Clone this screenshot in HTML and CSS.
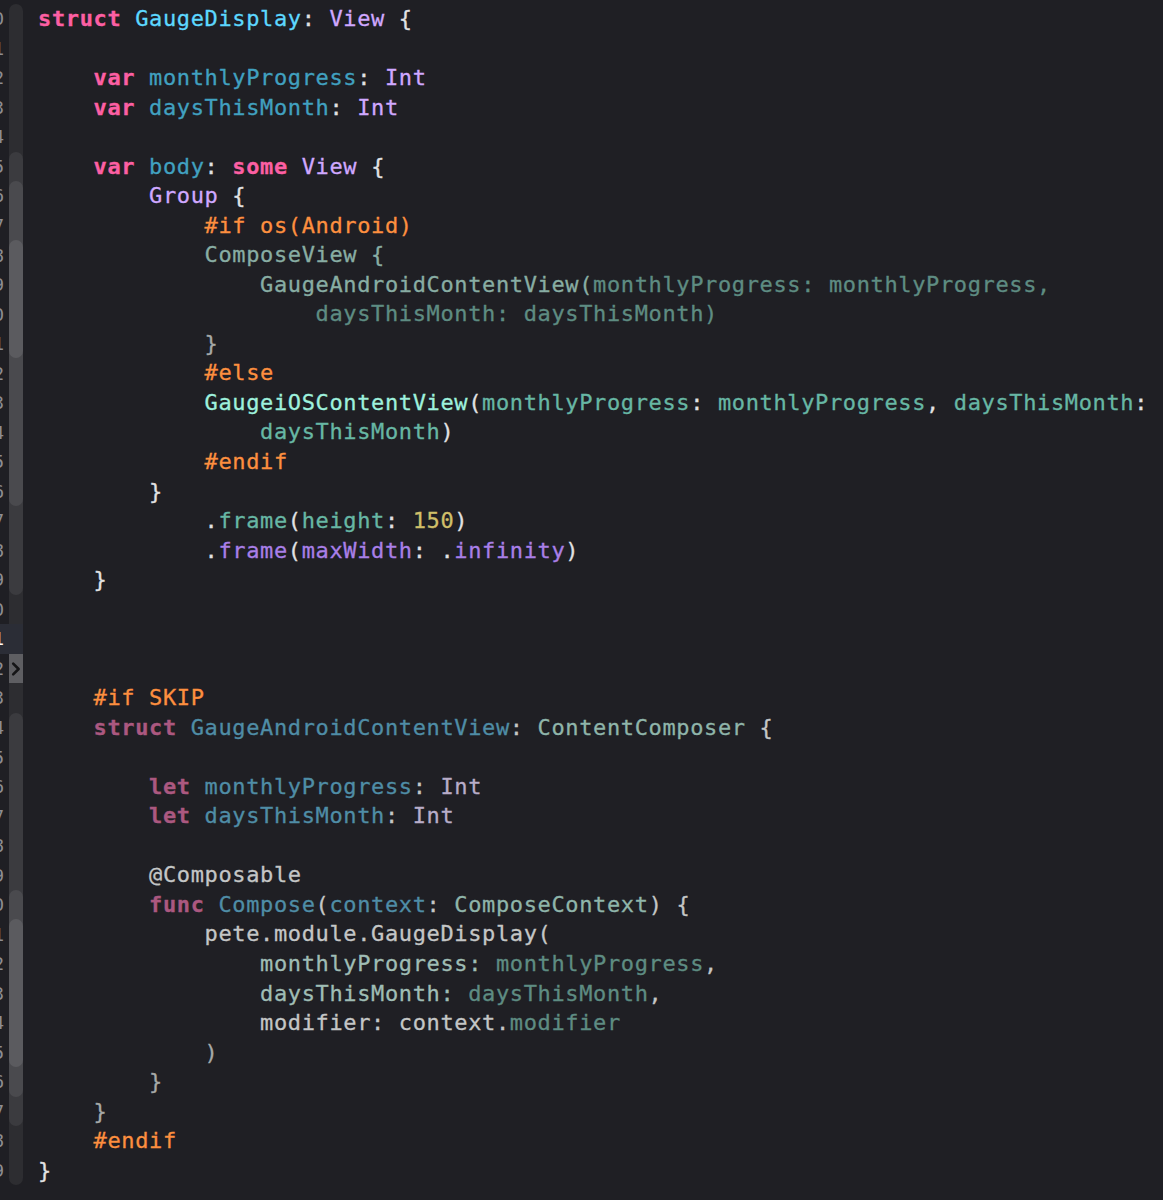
FILE: index.html
```html
<!DOCTYPE html>
<html lang="en">

<head>
    <meta charset="UTF-8">
    <meta name="viewport" content="width=device-width, initial-scale=1.0">
    <title>GaugeDisplay.swift</title>
    <link rel="stylesheet" href="styles.css">
</head>

<body>
    <div class="editor">
        <div class="line"><div class="gut"><span class="num"><b>10</b></span><span class="rib"><i class="d1 top"></i></span></div><pre class="src"><span class="k">struct</span> <span class="td">GaugeDisplay</span>: <span class="ty">View</span> {</pre></div>
        <div class="line"><div class="gut"><span class="num"><b>11</b></span><span class="rib"><i class="d1"></i></span></div><pre class="src"> </pre></div>
        <div class="line"><div class="gut"><span class="num"><b>12</b></span><span class="rib"><i class="d1"></i></span></div><pre class="src">    <span class="k">var</span> <span class="od">monthlyProgress</span>: <span class="ty">Int</span></pre></div>
        <div class="line"><div class="gut"><span class="num"><b>13</b></span><span class="rib"><i class="d1"></i></span></div><pre class="src">    <span class="k">var</span> <span class="od">daysThisMonth</span>: <span class="ty">Int</span></pre></div>
        <div class="line"><div class="gut"><span class="num"><b>14</b></span><span class="rib"><i class="d1"></i></span></div><pre class="src"> </pre></div>
        <div class="line"><div class="gut"><span class="num"><b>15</b></span><span class="rib in1"><i class="d2 top"></i></span></div><pre class="src">    <span class="k">var</span> <span class="od">body</span>: <span class="k">some</span> <span class="ty">View</span> {</pre></div>
        <div class="line"><div class="gut"><span class="num"><b>16</b></span><span class="rib in2"><i class="d3 top"></i></span></div><pre class="src">        <span class="ty">Group</span> {</pre></div>
        <div class="line"><div class="gut"><span class="num"><b>17</b></span><span class="rib"><i class="d3"></i></span></div><pre class="src">            <span class="pp">#if os(Android)</span></pre></div>
        <div class="line"><div class="gut"><span class="num"><b>18</b></span><span class="rib in3"><i class="d4 top"></i></span></div><pre class="src">            <span class="dc">ComposeView {</span></pre></div>
        <div class="line"><div class="gut"><span class="num"><b>19</b></span><span class="rib"><i class="d4"></i></span></div><pre class="src">                <span class="dc">GaugeAndroidContentView(</span><span class="da">monthlyProgress: monthlyProgress,</span></pre></div>
        <div class="line"><div class="gut"><span class="num"><b>20</b></span><span class="rib"><i class="d4"></i></span></div><pre class="src">                    <span class="da">daysThisMonth: daysThisMonth)</span></pre></div>
        <div class="line"><div class="gut"><span class="num"><b>21</b></span><span class="rib in3"><i class="d4 bot"></i></span></div><pre class="src">            <span class="dg">}</span></pre></div>
        <div class="line"><div class="gut"><span class="num"><b>22</b></span><span class="rib"><i class="d3"></i></span></div><pre class="src">            <span class="pp">#else</span></pre></div>
        <div class="line"><div class="gut"><span class="num"><b>23</b></span><span class="rib"><i class="d3"></i></span></div><pre class="src">            <span class="pt">GaugeiOSContentView</span>(<span class="pm">monthlyProgress</span>: <span class="pm">monthlyProgress</span>, <span class="pm">daysThisMonth</span>:</pre></div>
        <div class="line"><div class="gut"><span class="num"><b>24</b></span><span class="rib"><i class="d3"></i></span></div><pre class="src">                <span class="pm">daysThisMonth</span>)</pre></div>
        <div class="line"><div class="gut"><span class="num"><b>25</b></span><span class="rib"><i class="d3"></i></span></div><pre class="src">            <span class="pp">#endif</span></pre></div>
        <div class="line"><div class="gut"><span class="num"><b>26</b></span><span class="rib in2"><i class="d3 bot"></i></span></div><pre class="src">        }</pre></div>
        <div class="line"><div class="gut"><span class="num"><b>27</b></span><span class="rib"><i class="d2"></i></span></div><pre class="src">            .<span class="pm">frame</span>(<span class="pm">height</span>: <span class="nu">150</span>)</pre></div>
        <div class="line"><div class="gut"><span class="num"><b>28</b></span><span class="rib"><i class="d2"></i></span></div><pre class="src">            .<span class="om">frame</span>(<span class="om">maxWidth</span>: .<span class="om">infinity</span>)</pre></div>
        <div class="line"><div class="gut"><span class="num"><b>29</b></span><span class="rib in1"><i class="d2 bot"></i></span></div><pre class="src">    }</pre></div>
        <div class="line"><div class="gut"><span class="num"><b>30</b></span><span class="rib"><i class="d1"></i></span></div><pre class="src"> </pre></div>
        <div class="line cur"><div class="gut"><span class="num"><b>31</b></span><span class="rib"></span></div><pre class="src"> </pre></div>
        <div class="line"><div class="gut"><span class="num"><b>32</b></span><span class="rib fold"><svg width="14" height="29" viewBox="0 0 14 29"><path d="M4.2 9.6 L9.6 15 L4.2 20.4" fill="none" stroke="#141416" stroke-width="2.6" stroke-linecap="round" stroke-linejoin="round"/></svg></span></div><pre class="src"> </pre></div>
        <div class="line"><div class="gut"><span class="num"><b>33</b></span><span class="rib"><i class="d1"></i></span></div><pre class="src">    <span class="pp">#if SKIP</span></pre></div>
        <div class="line"><div class="gut"><span class="num"><b>34</b></span><span class="rib in1"><i class="d2 top"></i></span></div><pre class="src">    <span class="dk">struct</span> <span class="db">GaugeAndroidContentView</span><span class="dp">: </span><span class="dt">ContentComposer</span><span class="dp"> {</span></pre></div>
        <div class="line"><div class="gut"><span class="num"><b>35</b></span><span class="rib"><i class="d2"></i></span></div><pre class="src"> </pre></div>
        <div class="line"><div class="gut"><span class="num"><b>36</b></span><span class="rib"><i class="d2"></i></span></div><pre class="src">        <span class="dk">let</span> <span class="db">monthlyProgress</span><span class="dp">: </span><span class="dv">Int</span></pre></div>
        <div class="line"><div class="gut"><span class="num"><b>37</b></span><span class="rib"><i class="d2"></i></span></div><pre class="src">        <span class="dk">let</span> <span class="db">daysThisMonth</span><span class="dp">: </span><span class="dv">Int</span></pre></div>
        <div class="line"><div class="gut"><span class="num"><b>38</b></span><span class="rib"><i class="d2"></i></span></div><pre class="src"> </pre></div>
        <div class="line"><div class="gut"><span class="num"><b>39</b></span><span class="rib"><i class="d2"></i></span></div><pre class="src">        <span class="dp">@Composable</span></pre></div>
        <div class="line"><div class="gut"><span class="num"><b>40</b></span><span class="rib in2"><i class="d3 top"></i></span></div><pre class="src">        <span class="dk">func</span> <span class="db">Compose</span><span class="dp">(</span><span class="db">context</span><span class="dp">: </span><span class="dt">ComposeContext</span><span class="dp">) {</span></pre></div>
        <div class="line"><div class="gut"><span class="num"><b>41</b></span><span class="rib in3"><i class="d4 top"></i></span></div><pre class="src">            <span class="dp">pete.module.GaugeDisplay(</span></pre></div>
        <div class="line"><div class="gut"><span class="num"><b>42</b></span><span class="rib"><i class="d4"></i></span></div><pre class="src">                <span class="dl">monthlyProgress: </span><span class="da">monthlyProgress</span><span class="dp">,</span></pre></div>
        <div class="line"><div class="gut"><span class="num"><b>43</b></span><span class="rib"><i class="d4"></i></span></div><pre class="src">                <span class="dl">daysThisMonth: </span><span class="da">daysThisMonth</span><span class="dp">,</span></pre></div>
        <div class="line"><div class="gut"><span class="num"><b>44</b></span><span class="rib"><i class="d4"></i></span></div><pre class="src">                <span class="dp">modifier: context.</span><span class="da">modifier</span></pre></div>
        <div class="line"><div class="gut"><span class="num"><b>45</b></span><span class="rib in3"><i class="d4 bot"></i></span></div><pre class="src">            <span class="dg">)</span></pre></div>
        <div class="line"><div class="gut"><span class="num"><b>46</b></span><span class="rib in2"><i class="d3 bot"></i></span></div><pre class="src">        <span class="dg">}</span></pre></div>
        <div class="line"><div class="gut"><span class="num"><b>47</b></span><span class="rib in1"><i class="d2 bot"></i></span></div><pre class="src">    <span class="dg">}</span></pre></div>
        <div class="line"><div class="gut"><span class="num"><b>48</b></span><span class="rib"><i class="d1"></i></span></div><pre class="src">    <span class="pp">#endif</span></pre></div>
        <div class="line"><div class="gut"><span class="num"><b>49</b></span><span class="rib"><i class="d1 bot"></i></span></div><pre class="src">}</pre></div>
    </div>
</body>

</html>
```

FILE: styles.css
```css
* {
    padding: 0;
    margin: 0;
    box-sizing: border-box;
}

html,
body {
    background-color: #1f1f24;
}

body {
    min-height: 1200px;
    padding-top: 4px;
}

.editor {
    display: flex;
    flex-direction: column;
}

.line {
    display: flex;
    height: 29.54px;
}

/* gutter: line numbers (scrolled off to the left) + folding ribbon */
.gut {
    display: flex;
    width: 23px;
    flex-shrink: 0;
}

.num {
    display: flex;
    justify-content: flex-end;
    align-items: center;
    width: 9px;
    padding-right: 5px;
    overflow: hidden;
    font-family: "DejaVu Sans Mono", monospace;
    font-size: 18px;
    color: #8d8d92;
}

.num b {
    font-weight: normal;
    white-space: nowrap;
}

.cur .gut {
    background-color: #2b2d36;
}

.cur .num {
    color: #ffffff;
}

.rib {
    display: block;
    width: 14px;
    height: 100%;
}

.rib i {
    display: block;
    height: 100%;
}

.rib.in1 {
    background-color: #2d2d31;
}

.rib.in2 {
    background-color: #3b3b3f;
}

.rib.in3 {
    background-color: #4a4a4e;
}

.rib .d1 {
    background-color: #2d2d31;
}

.rib .d2 {
    background-color: #3b3b3f;
}

.rib .d3 {
    background-color: #4a4a4e;
}

.rib .d4 {
    background-color: #5b5b5f;
}

.rib .top {
    border-radius: 7px 7px 0 0;
}

.rib .bot {
    border-radius: 0 0 7px 7px;
}

.rib.fold {
    background-color: #5e5e62;
}

.rib.fold svg {
    display: block;
}

/* code */
.src {
    margin-left: 15px;
    font-family: "DejaVu Sans Mono", monospace;
    font-size: 22px;
    letter-spacing: 0.63px;
    line-height: 29.54px;
    color: #e1e1e3;
    white-space: pre;
    -webkit-text-stroke: 0.3px currentColor;
}

.k {
    color: #fc5fa3;
    font-weight: bold;
}

.td {
    color: #5dd8ff;
}

.od {
    color: #41a1c0;
}

.ty {
    color: #d0a8ff;
}

.pp {
    color: #fd8f3f;
}

.pt {
    color: #9ef1dd;
}

.pm {
    color: #67b7a4;
}

.nu {
    color: #d0bf69;
}

.om {
    color: #a97fe8;
}

/* dimmed / unresolved code */
.dc {
    color: #88ada3;
}

.da {
    color: #5e8c82;
}

.dg {
    color: #a6a9a8;
}

.dk {
    color: #ab5880;
    font-weight: bold;
}

.db {
    color: #4f8da6;
}

.dt {
    color: #8fb5aa;
}

.dp {
    color: #c4c6c6;
}

.dl {
    color: #9fbdb5;
}

.dv {
    color: #b8adc9;
}
```
